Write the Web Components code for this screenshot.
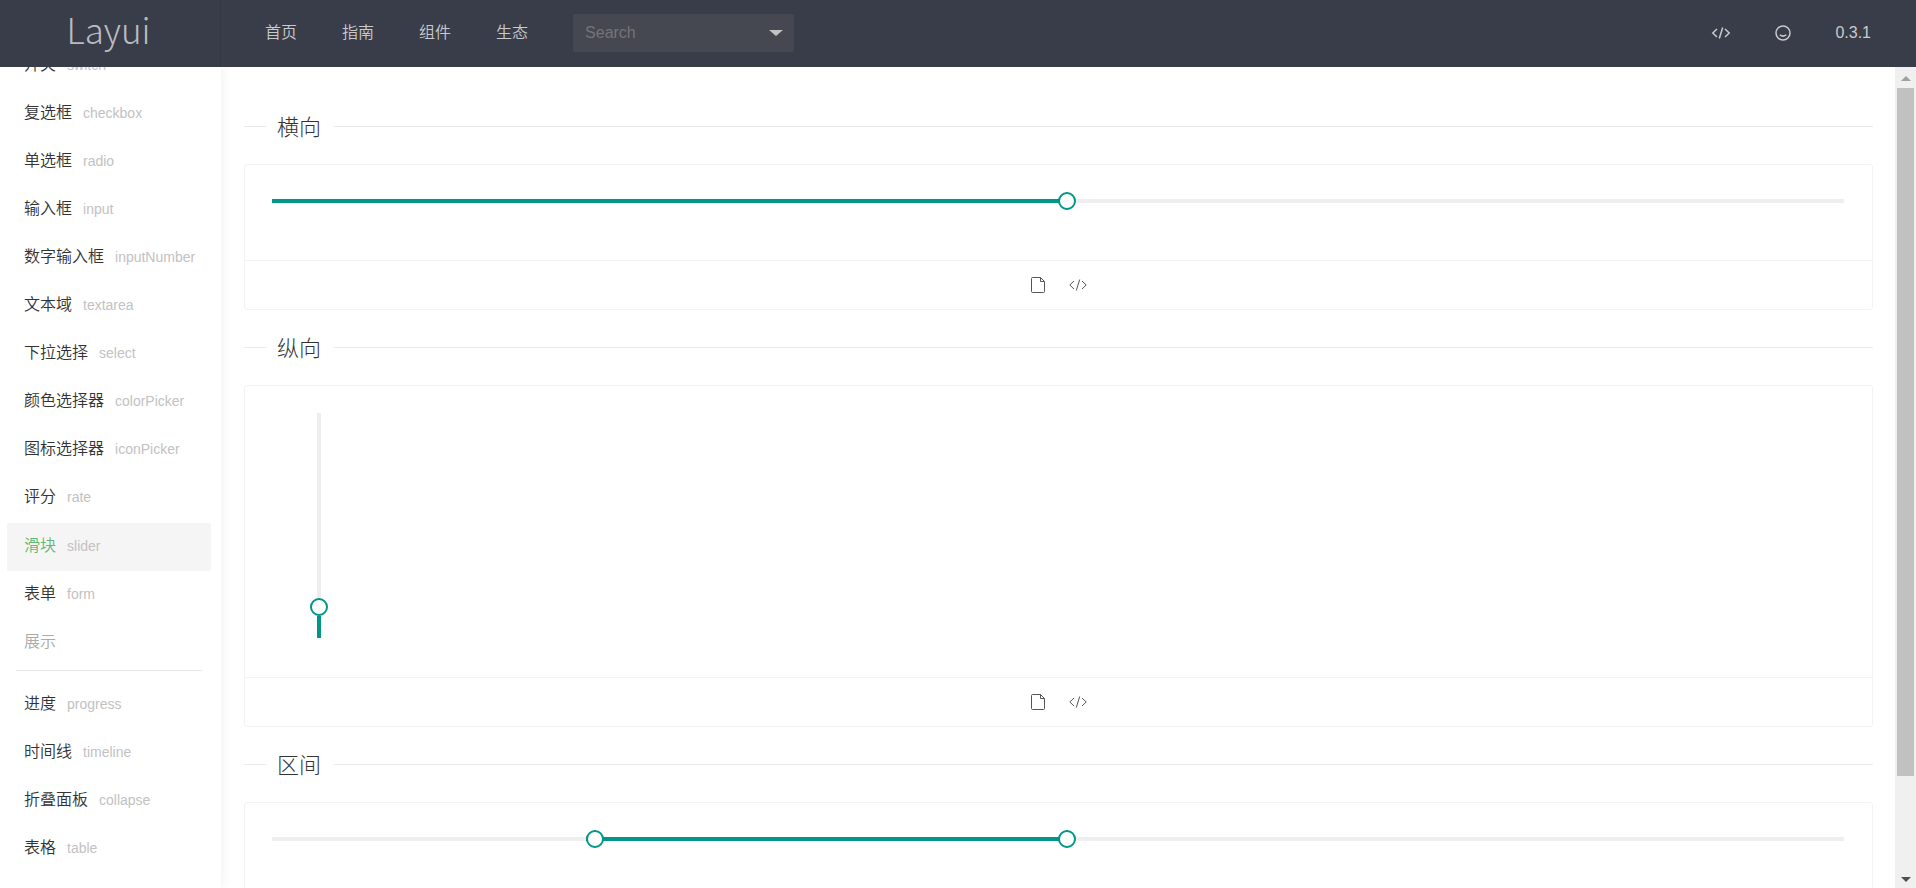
<!DOCTYPE html>
<html lang="zh-CN">
<head>
<meta charset="utf-8">
<title>Layui - slider</title>
<style>
html, body { height: 100%; margin: 0; }
body { font: 350 16px/24px "Liberation Sans", "Noto Sans CJK SC", sans-serif; color: #333; background: #fff; overflow: hidden; }
</style>
</head>
<body>
<doc-app></doc-app>
<script>
const define = (name, html, setup) => customElements.define(name, class extends HTMLElement {
  constructor() {
    super();
    const t = document.createElement('template');
    t.innerHTML = html;
    this.attachShadow({ mode: 'open' }).append(t.content.cloneNode(true));
  }
  connectedCallback() { if (setup) setup(this, this.shadowRoot); }
});

const glyphs = {
  code: '<svg viewBox="0 0 20 18" width="20" height="18"><path d="M6 5 1.800 9 6 13M14 5 18.200 9 14 13M11.700 3.500 8.300 14.500"/></svg>',
  file: '<svg viewBox="0 0 16 18" width="16" height="18"><path d="M1.500 2.500Q1.500 1.500 2.500 1.500H10.500L14.500 5.500V15.500Q14.500 16.500 13.500 16.500H2.500Q1.500 16.500 1.500 15.500ZM10.500 1.500V5.500H14.500"/></svg>',
  smile: '<svg viewBox="0 0 18 18" width="18" height="18"><circle cx="9" cy="9" r="7"/><path d="M5.800 10.800Q9 13.500 12.200 10.800"/></svg>'
};

define('ui-icon', `<style>
:host { display: inline-flex; }
svg { fill: none; stroke: currentColor; stroke-width: var(--icon-stroke, 1px); }
</style><span style="display:flex"></span>`, (el, root) => {
  root.querySelector('span').innerHTML = glyphs[el.getAttribute('name')];
});

define('nav-link', `<style>
:host { display: block; }
a { display: flex; align-items: center; color: inherit; text-decoration: none; }
</style><a href="#"><slot></slot></a>`);

define('search-select', `<style>
:host { display: flex; width: 221px; height: 38px; background: #454851; border-radius: 2px; }
input { flex: 1; min-width: 0; box-sizing: border-box; padding: 0 0 0 12px; border: 0; background: none; color: #c2c2c2; font: inherit; outline: 0; }
input::placeholder { color: #757575; opacity: 1; }
button { width: 36px; padding: 0 12px 0 11px; border: 0; background: none; display: flex; align-items: center; }
i { border: 7px solid transparent; border-top: 6px solid #c2c2c2; border-bottom: 0; }
</style><input type="text" placeholder="Search" aria-label="Search"><button aria-label="展开"><i></i></button>`);

define('site-header', `<style>
:host { display: flex; height: 67px; background: #393d49; color: #c9cacd; }
.logo { width: 221px; box-sizing: border-box; border-right: 1px solid #343843; display: flex; justify-content: center; color: #b9bbc0; font: 200 35px/58px "Noto Sans CJK SC", sans-serif; text-decoration: none; padding-right: 3px; }
nav { flex: 1; display: flex; align-items: center; gap: 45px; padding: 0 44px 2px; }
.tools { display: flex; align-items: center; gap: 43px; padding: 0 45px 2px; --icon-stroke: 1.500px; }
</style>
<a class="logo" href="#">Layui</a>
<nav><nav-link>首页</nav-link><nav-link>指南</nav-link><nav-link>组件</nav-link><nav-link>生态</nav-link><search-select></search-select></nav>
<div class="tools"><nav-link><ui-icon name="code"></ui-icon></nav-link><nav-link><ui-icon name="smile"></ui-icon></nav-link><nav-link>0.3.1</nav-link></div>`);

define('menu-item', `<style>
:host { display: block; margin: 0 10px 0 7px; border-radius: 2px; }
:host([active]) { margin-top: 1px; background: #f5f5f5; color: #5fb878; }
a { display: flex; align-items: center; gap: 11px; height: 46px; padding: 0 17px 2px; color: inherit; text-decoration: none; white-space: nowrap; }
small { font-size: 14px; color: #c2c2c2; }
</style><a href="#"><slot></slot><small></small></a>`, (el, root) => {
  root.querySelector('small').textContent = el.getAttribute('en');
});

define('side-menu', `<style>
:host { display: block; overflow: hidden; }
nav { margin-top: -25px; }
.group { margin: 0 19px 10px 16px; padding: 0 8px 5px; height: 46px; line-height: 46px; color: #aaa; border-bottom: 1px solid #e8e8e8; }
</style><nav>
<menu-item en="switch">开关</menu-item>
<menu-item en="checkbox">复选框</menu-item>
<menu-item en="radio">单选框</menu-item>
<menu-item en="input">输入框</menu-item>
<menu-item en="inputNumber">数字输入框</menu-item>
<menu-item en="textarea">文本域</menu-item>
<menu-item en="select">下拉选择</menu-item>
<menu-item en="colorPicker">颜色选择器</menu-item>
<menu-item en="iconPicker">图标选择器</menu-item>
<menu-item en="rate">评分</menu-item>
<menu-item en="slider" active>滑块</menu-item>
<menu-item en="form">表单</menu-item>
<div class="group">展示</div>
<menu-item en="progress">进度</menu-item>
<menu-item en="timeline">时间线</menu-item>
<menu-item en="collapse">折叠面板</menu-item>
<menu-item en="table">表格</menu-item>
</nav>`);

define('section-title', `<style>
:host { display: block; margin: 21px 0 22px; }
h2 { display: flex; align-items: center; gap: 11px; height: 32px; margin: 0; font: 300 22px/30px "Noto Sans CJK SC", sans-serif; }
h2::before, h2::after { content: ""; height: 1px; background: #eaeaea; }
h2::before { width: 22px; }
h2::after { flex: 1; }
span { align-self: flex-start; padding-right: 2px; }
</style><h2><span><slot></slot></span></h2>`);

/* The inputs overhang the track by one thumb, so a thumb starts exactly at its percentage. */
define('range-slider', `<style>
:host { display: block; margin-bottom: 11px; }
.box { display: grid; align-items: center; height: 18px; }
.box > * { grid-area: 1 / 1; }
.track { height: 4px; display: grid; grid-template-columns: var(--from) calc(var(--to) - var(--from)); background: #eee; }
.track::after { content: ""; grid-column: 2; margin-right: -9px; background: #009688; }
input { appearance: none; width: calc(100% + 18px); height: 18px; margin: 0; background: none; pointer-events: none; }
input::-webkit-slider-thumb { appearance: none; box-sizing: border-box; width: 18px; height: 18px; border: 2px solid #009688; border-radius: 50%; background: #fff; pointer-events: auto; cursor: grab; }
:host([vertical]) { margin: 0 0 0 38px; }
:host([vertical]) .box { width: 18px; height: 225px; justify-items: center; align-items: end; }
:host([vertical]) .track { width: 4px; height: 100%; grid-template: calc(100% - var(--to)) var(--to) / 1fr; }
:host([vertical]) .track::after { grid-area: 2 / 1; margin: 0; }
:host([vertical]) input { writing-mode: vertical-lr; direction: rtl; width: 18px; height: calc(100% + 18px); }
</style><div class="box"><div class="track"></div></div>`, (el, root) => {
  const box = root.querySelector('.box');
  const values = el.getAttribute('values').split(',').map(Number);
  const paint = v => {
    const s = [...v].sort((a, b) => a - b);
    el.style.setProperty('--from', (s.length > 1 ? s[0] : 0) + '%');
    el.style.setProperty('--to', s[s.length - 1] + '%');
  };
  values.forEach((value, i) => {
    const input = document.createElement('input');
    input.type = 'range';
    input.value = value;
    input.setAttribute('aria-label', el.getAttribute('label'));
    input.addEventListener('input', () => { values[i] = +input.value; paint(values); });
    box.append(input);
  });
  paint(values);
});

define('demo-card', `<style>
:host { display: block; border: 1px solid #f3f3f3; border-radius: 3px; }
.body { padding: 27px 28px 39px 27px; display: flow-root; }
footer { display: flex; justify-content: center; align-items: center; gap: 22px; height: 48px; border-top: 1px solid #f3f3f3; color: #555; }
button { display: flex; padding: 0; border: 0; background: none; color: inherit; }
</style><div class="body"><slot></slot></div>
<footer><button aria-label="文档"><ui-icon name="file"></ui-icon></button><button aria-label="代码"><ui-icon name="code"></ui-icon></button></footer>`);

define('scroll-rail', `<style>
:host { display: flex; flex-direction: column; align-items: center; width: 21px; box-sizing: border-box; padding: 9px 0 6px; background: #f0f0f0; }
i { border: 5px solid transparent; }
.up { border-top: 0; border-bottom-color: #a0a0a0; }
.down { border-bottom: 0; border-top-color: #505050; }
.lane { flex: 1; width: 17px; margin: 7px 0; }
.thumb { height: 88%; background: #c1c1c1; }
</style><i class="up"></i><div class="lane"><div class="thumb"></div></div><i class="down"></i>`);

define('doc-app', `<style>
:host { display: grid; grid-template: auto minmax(0, 1fr) / 221px minmax(0, 1fr) auto; height: 100vh; }
site-header { grid-column: 1 / -1; z-index: 1; }
side-menu { box-shadow: 0 0 11px rgba(0, 0, 0, .07); clip-path: inset(0 -20px 0 0); }
main { overflow: hidden; padding: 22px 22px 0 23px; }
</style>
<site-header></site-header>
<side-menu></side-menu>
<main>
<section-title>横向</section-title>
<demo-card><range-slider label="横向" values="50"></range-slider></demo-card>
<section-title>纵向</section-title>
<demo-card><range-slider label="纵向" values="10" vertical></range-slider></demo-card>
<section-title>区间</section-title>
<demo-card><range-slider label="区间" values="20,50"></range-slider></demo-card>
</main>
<scroll-rail></scroll-rail>`);
</script>
</body>
</html>
